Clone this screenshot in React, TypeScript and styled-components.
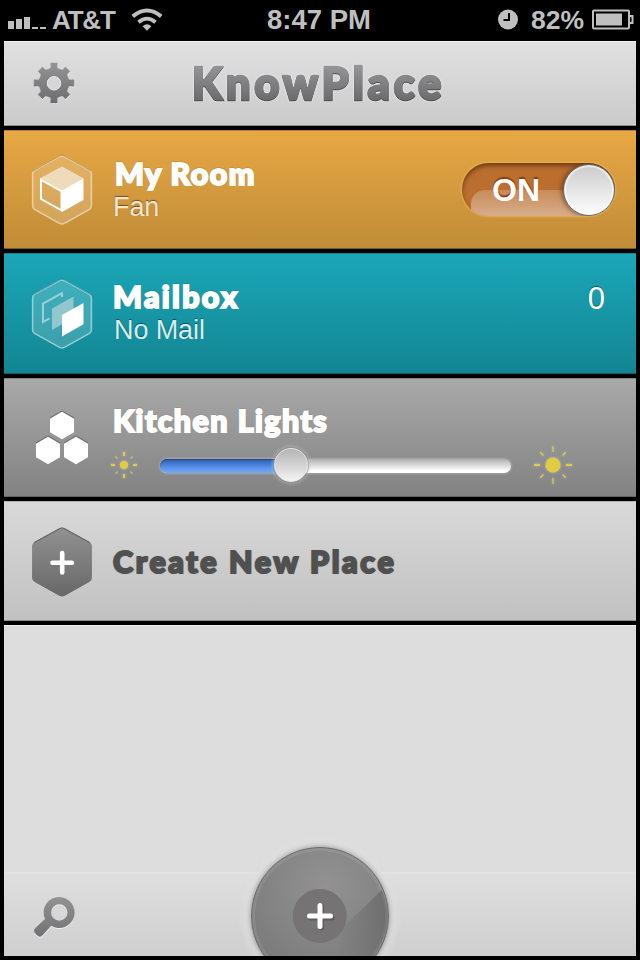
import React from "react";
import styled, { createGlobalStyle } from "styled-components";

const GlobalStyle = createGlobalStyle`
  * { box-sizing: border-box; }
  body { margin: 0; background: #000; }
`;

const sans = `"Liberation Sans", Arial, sans-serif`;
const display = `Lato, "Open Sans", sans-serif`;

const Screen = styled.div`
  width: 640px;
  height: 960px;
  display: flex;
  flex-direction: column;
  background: #000;
  overflow: hidden;
  font-family: ${sans};
`;

const StatusBar = styled.div`
  height: 41px;
  flex: none;
  display: grid;
  grid-template-columns: 1fr auto 1fr;
  align-items: center;
  padding: 0 6px 2px 8px;
  color: #bfbfbf;
`;

const StatusGroup = styled.div<{ $end?: boolean }>`
  display: flex;
  align-items: center;
  justify-content: ${(p) => (p.$end ? "flex-end" : "flex-start")};
`;

const StatusText = styled.span<{ $size: number; $track?: number; $ml?: number; $mr?: number }>`
  font-weight: 700;
  font-size: ${(p) => p.$size}px;
  line-height: 38px;
  white-space: nowrap;
  letter-spacing: ${(p) => p.$track ?? 0}px;
  margin-left: ${(p) => p.$ml ?? 0}px;
  margin-right: ${(p) => p.$mr ?? 0}px;
`;

const Content = styled.div`
  position: relative;
  width: 632px;
  height: 915px;
  margin: 0 4px;
  display: flex;
  flex-direction: column;
  overflow: hidden;
`;

const Header = styled.header`
  height: 85px;
  flex: none;
  display: grid;
  grid-template-columns: 159px 1fr 120px;
  align-items: center;
  padding: 0 0 1px 29px;
  background: linear-gradient(#e1e1e1, #cacaca);
  box-shadow: inset 0 1px #f0f0f0, inset 0 -1px #8e8e8e;
`;

const Title = styled.h1`
  margin: -1px 0 0;
  font: 900 43px/60px ${display};
  letter-spacing: 4.1px;
  white-space: nowrap;
  background: linear-gradient(#969698 20%, #69696b 82%);
  background-clip: text;
  -webkit-background-clip: text;
  color: transparent;
  -webkit-text-stroke: 2.4px transparent;
  filter: drop-shadow(0 1px 0 #4f4f4f) drop-shadow(0 0 1px #f4f4f4);
`;

const tones = {
  amber: ["#e8a845", "#c08c37", "#7c5a22"],
  teal: ["#1ba7b9", "#138592", "#0c5f69"],
  gray: ["#a9a9a9", "#828282", "#646464"],
  light: ["#d9d9d9", "#c1c1c1", "#8c8c8c"],
};

const Row = styled.section<{ $tone: keyof typeof tones; $height: number }>`
  height: ${(p) => p.$height}px;
  flex: none;
  margin-top: 4px;
  display: grid;
  grid-template-columns: 60px 1fr auto;
  column-gap: 20px;
  align-items: center;
  padding: 0 20px 0 28px;
  background: linear-gradient(${(p) => tones[p.$tone][0]}, ${(p) => tones[p.$tone][1]});
  box-shadow: inset 0 1px ${(p) => tones[p.$tone][2]}80, inset 0 -1px ${(p) => tones[p.$tone][2]};
`;

const Labels = styled.div<{ $top?: number }>`
  display: flex;
  flex-direction: column;
  align-self: start;
  padding-top: ${(p) => p.$top ?? 25}px;
  min-width: 0;
`;

const Name = styled.h2<{ $track?: number; $indent?: number; $dark?: boolean }>`
  margin: 0;
  padding-left: ${(p) => p.$indent ?? 0}px;
  font: 900 30.5px/36px ${display};
  letter-spacing: ${(p) => p.$track ?? 0}px;
  white-space: nowrap;
  color: ${(p) => (p.$dark ? "#505050" : "#fff")};
  -webkit-text-stroke: 2px ${(p) => (p.$dark ? "#505050" : "#fff")};
  text-shadow: ${(p) => (p.$dark ? "0 0 2px #777" : "0 -1px 1px rgba(0, 0, 0, 0.65), 1px 0 1px rgba(0, 0, 0, 0.3)")};
`;

const Detail = styled.p<{ $tint: string; $indent?: number }>`
  margin: 2px 0 0;
  padding-left: ${(p) => p.$indent ?? 0}px;
  font: 400 27px/28px ${sans};
  letter-spacing: -0.1px;
  color: ${(p) => p.$tint};
  text-shadow: 0 -1px 1px rgba(0, 0, 0, 0.45);
`;

const Count = styled.span`
  align-self: start;
  padding: 28px 11px 0 0;
  font: 400 31px/36px ${sans};
  color: #fff;
  text-shadow: 0 -1px 1px rgba(0, 0, 0, 0.4);
`;

const Switch = styled.div`
  position: relative;
  width: 153px;
  height: 53px;
  margin-right: 1px;
  border-radius: 27px;
  display: flex;
  align-items: center;
  justify-content: space-between;
  padding: 1px 0 0 30px;
  overflow: hidden;
  background: #ba6e2f;
  box-shadow: inset 0 3px 4px rgba(60, 25, 0, 0.55), 0 0 2px 1px rgba(250, 200, 110, 0.5);

  /* Glossy highlight on the lower half */
  &::before {
    content: "";
    position: absolute;
    inset: 27px 0 0 9px;
    border-radius: 14px 0 0 0;
    background: linear-gradient(rgba(255, 255, 255, 0.2), rgba(255, 255, 255, 0.44));
  }
`;

const SwitchText = styled.span`
  position: relative;
  font: 700 32px/52px ${sans};
  color: #fff;
  text-shadow: 0 -2px 1px #88410f;
`;

const SwitchKnob = styled.span`
  position: relative;
  width: 52px;
  height: 52px;
  border-radius: 50%;
  border: 1px solid #5f666c;
  background: linear-gradient(#cbcbcb, #fefefe);
  box-shadow: inset 0 0 1px 2px rgba(255, 255, 255, 0.6), -2px 0 4px rgba(70, 30, 0, 0.5);
`;

const SliderLine = styled.div`
  display: grid;
  grid-template-columns: 36px 351px 42px;
  column-gap: 18px;
  align-items: center;
  height: 44px;
  margin: 5px 0 0 -6px;
`;

const Track = styled.div`
  position: relative;
  width: 351px;
  height: 14px;
  margin-top: 2px;
  border-radius: 7px;
  background: linear-gradient(#b0b0b0, #fff 85%);
  box-shadow: 0 0 3px rgba(225, 225, 225, 0.65);
`;

const Fill = styled.div`
  height: 14px;
  border-radius: 7px 0 0 7px;
  background: linear-gradient(#2b5db2, #5b94eb 65%, #72a8f8);
  box-shadow: inset 0 1px 1px #224a91;
`;

const Thumb = styled.div`
  position: absolute;
  top: -11px;
  width: 34px;
  height: 34px;
  margin-left: -17px;
  border-radius: 50%;
  border: 1px solid #e6e6e6;
  background: linear-gradient(#b3b3b3, #f4f4f4);
  box-shadow: 0 0 1px 1px rgba(125, 125, 125, 0.6), 0 0 3px 2px rgba(220, 220, 220, 0.4);
`;

const Empty = styled.main`
  height: 247px;
  flex: none;
  margin-top: 4px;
  background: #dddddd;
  box-shadow: inset 0 1px #f0f0f0;
`;

const Footer = styled.footer`
  height: 84px;
  flex: none;
  display: flex;
  align-items: center;
  padding: 6px 0 0 29px;
  background: linear-gradient(#dfdfdf, #cfcfcf);
  box-shadow: inset 0 2px #e3e3e3;
`;

const AddButton = styled.button`
  position: absolute;
  left: 247px;
  bottom: -29px;
  width: 138px;
  height: 138px;
  padding: 0;
  border: 1px solid #6b6b6b;
  border-radius: 50%;
  display: grid;
  place-items: center;
  background: radial-gradient(circle at 55% 28%, #929292, #7b7b7b 75%);
  box-shadow: inset 0 0 0 3px rgba(255, 255, 255, 0.09), 0 0 5px rgba(60, 60, 60, 0.5), 0 0 6px 9px rgba(224, 224, 224, 0.6);
`;

const Icon = styled.svg`
  display: block;
  overflow: visible;
`;

const gearPath = (() => {
  const parts: string[] = [];
  for (let i = 0; i < 8; i++) {
    const base = (i * Math.PI) / 4;
    const tip = i % 2 ? 19.6 : 20.2;
    const points = [
      [-0.3, 15],
      [-0.2, 15.6],
      [-0.16, tip],
      [0.16, tip],
      [0.2, 15.6],
      [0.3, 15],
    ];
    points.forEach(([a, r]) => {
      const x = 21 + r * Math.sin(base + a);
      const y = 21 - r * Math.cos(base + a);
      parts.push(`${parts.length ? "L" : "M"}${x.toFixed(2)} ${y.toFixed(2)}`);
    });
  }
  return `${parts.join("")}Z`;
})();

const Gear = () => (
  <Icon width="42" height="42" viewBox="0 0 42 42">
    <defs>
      <linearGradient id="gear" x1="0" y1="0" x2="0" y2="1">
        <stop offset="0" stopColor="#949495" />
        <stop offset="1" stopColor="#6d6d70" />
      </linearGradient>
    </defs>
    <path d={gearPath} fill="#f2f2f2" transform="translate(.4 1)" />
    <path d={gearPath} fill="url(#gear)" stroke="url(#gear)" strokeWidth=".5" />
    <circle cx="21" cy="21.3" r="6.7" fill="#d6d6d6" stroke="#ececec" />
  </Icon>
);

const hexagon = "M27.5 1.6Q30 .2 32.5 1.6L57.5 15.4Q59.4 16.5 59.4 19V51Q59.4 53.2 57.5 54.4L32.5 68.4Q30 69.8 27.5 68.4L2.5 54.4Q.6 53.2 .6 51V19Q.6 16.5 2.5 15.4Z";

const HexFrame = ({ children }: { children: React.ReactNode }) => (
  <Icon width="60" height="70" viewBox="0 0 60 70">
    <path d={hexagon} fill="#fff" fillOpacity=".17" stroke="#fff" strokeOpacity=".5" strokeWidth="1.5" />
    <path d="M1 16L30-.2L59 16" fill="none" stroke="#000" strokeOpacity=".22" strokeWidth="1" />
    {children}
  </Icon>
);

const RoomIcon = () => (
  <HexFrame>
    <path d="M30 11.5L51.5 23.3L30 35.3L8 23.3Z" fill="#f0dabc" />
    <path d="M30 35.3L51.5 23.3V45L30 57Z" fill="#fff" />
    <path d="M9 24.8L29.5 36V55.4L9 44Z" fill="none" stroke="#fff" strokeWidth="2" />
  </HexFrame>
);

const MailIcon = () => (
  <HexFrame>
    <path d="M30 18V14.2L11 24.6V43L17.5 39.3" fill="none" stroke="#9ad0d6" strokeWidth="2" />
    <path d="M20 29.5L41.5 17.6V39L20 51Z" fill="#91c7ce" />
    <path d="M30 36L51.5 24V45.3L30 57.5Z" fill="#fff" />
  </HexFrame>
);

const LightsIcon = () => (
  <Icon width="60" height="70" viewBox="0 0 60 70">
    {[
      [30, 22.5],
      [16, 47.5],
      [44, 47.5],
    ].map(([x, y]) => (
      <g key={x} transform={`translate(${x} ${y})`}>
        <path d="M-12-7.6L0-14.3L12-7.6" fill="none" stroke="#5c5c5c" strokeOpacity=".7" strokeWidth="1.2" />
        <path d="M0-13.7L12-6.8V6.8L0 13.7L-12 6.8V-6.8Z" fill="#fff" />
      </g>
    ))}
  </Icon>
);

const PlaceIcon = () => (
  <Icon width="60" height="70" viewBox="0 -1 60 70">
    <defs>
      <linearGradient id="place" x1="0" y1="0" x2="0" y2="1">
        <stop offset="0" stopColor="#919191" />
        <stop offset="1" stopColor="#686868" />
      </linearGradient>
    </defs>
    <path d={hexagon} fill="url(#place)" stroke="url(#place)" />
    <path d="M2 15.8L28 1.5Q30 .5 32 1.5L58 15.8" fill="none" stroke="#686868" strokeWidth="1.2" />
    <path d="M30.2 26V45.5M20.5 35.8H40" stroke="#fff" strokeWidth="4.6" strokeLinecap="round" />
  </Icon>
);

const Sun = ({ size, core, inner, outer, shift = 0 }: { size: number; core: number; inner: number; outer: number; shift?: number }) => (
  <Icon width={size} height={size} viewBox={`${-size / 2 - shift} ${-size / 2} ${size} ${size}`}>
    <g filter="drop-shadow(0 0 1.5px #bdbdbd)">
      <circle r={core} fill="#e0cb41" />
      {[0, 45, 90, 135, 180, 225, 270, 315].map((angle) => (
        <path
          key={angle}
          d={angle % 90 ? `M0 ${-inner - 0.5}V${-outer + 1}` : `M0 ${-inner}V${-outer}`}
          transform={`rotate(${angle})`}
          stroke="#e0cb41"
          strokeWidth={size < 40 ? (angle % 90 ? 1 : 2) : angle % 180 === 90 ? 2 : 1.2}
        />
      ))}
    </g>
  </Icon>
);

const Signal = () => (
  <Icon width="39" height="14" viewBox="0 0 39 14">
    <path d="M0 8h6v8H0zM8 6h6v10H8zM16 4h6v12h-6zM24 14h6v2h-6zM32 14h6v2h-6z" fill="#bfbfbf" />
  </Icon>
);

const Wifi = () => (
  <Icon width="32" height="24" viewBox="0 0 32 24">
    <g fill="none" stroke="#bfbfbf" strokeWidth="4">
      <path d="M1.8 8.4Q16-3.4 30.2 8.4" />
      <path d="M7.5 14.2Q16 7 24.5 14.2" strokeWidth="3.8" />
    </g>
    <path d="M16 22.7L11.6 18.3Q16 14.3 20.4 18.3Z" fill="#bfbfbf" />
  </Icon>
);

const Clock = () => (
  <Icon width="20" height="20" viewBox="0 0.5 20 20">
    <circle cx="10" cy="10" r="10" fill="#bfbfbf" />
    <path d="M11 3.5V10.5H5.5" fill="none" stroke="#000" strokeWidth="2" />
  </Icon>
);

const Battery = () => (
  <Icon width="42" height="20" viewBox="0 0.5 42 20">
    <rect x="1" y="1" width="36" height="18" rx="1" fill="none" stroke="#bfbfbf" strokeWidth="2" />
    <path d="M4 4h26v12H4z" fill="#bfbfbf" />
    <path d="M38 6.5h2.5v7H38" fill="none" stroke="#bfbfbf" strokeWidth="2" />
  </Icon>
);

const Magnifier = () => (
  <Icon width="42" height="42" viewBox="0 0 42 42">
    <defs>
      <linearGradient id="lens" x1="0" y1="0" x2="0" y2="1">
        <stop offset="0" stopColor="#929293" />
        <stop offset="1" stopColor="#727274" />
      </linearGradient>
    </defs>
    <g filter="drop-shadow(0 1px .5px #eee)">
      <path
        fill="url(#lens)"
        fillRule="evenodd"
        d="M26.3 1A15.5 15.5 0 1 1 18.2 29.8L9.5 39.3Q6.8 42 4 39.2L2 37.2Q-.2 34.7 2.4 32L12 23A15.5 15.5 0 0 1 26.3 1ZM26.3 8.3A8.2 8.2 0 1 0 26.3 24.7A8.2 8.2 0 0 0 26.3 8.3Z"
      />
    </g>
  </Icon>
);

const AddGlyph = () => (
  <Icon width="136" height="136" viewBox="-68 -68 136 136">
    <defs>
      <linearGradient id="shade" gradientUnits="userSpaceOnUse" x1="66" y1="0" x2="12" y2="22">
        <stop offset="0" stopColor="#555" stopOpacity=".42" />
        <stop offset="1" stopColor="#555" stopOpacity="0" />
      </linearGradient>
    </defs>
    <path d="M14 20L62-26A67 67 0 0 1 48 47L14 66Z" fill="url(#shade)" />
    <circle r="27" cx="-.3" fill="#757373" />
    <g strokeLinecap="round" strokeWidth="5" fill="none">
      <path d="M1-10.2V11.5M-9.8 1.5H11.8" stroke="#4e4e4e" strokeOpacity=".6" transform="translate(.5 .5)" />
      <path d="M0-10.5V10.5M-10.5 0H10.5" stroke="#fff" />
    </g>
  </Icon>
);

export default function App() {
  return (
    <Screen>
      <GlobalStyle />
      <StatusBar>
        <StatusGroup>
          <Signal />
          <StatusText $size={26} $track={-1.2} $ml={5} $mr={16}>AT&amp;T</StatusText>
          <Wifi />
        </StatusGroup>
        <StatusText $size={27.5} $ml={-4}>8:47 PM</StatusText>
        <StatusGroup $end>
          <Clock />
          <StatusText $size={26.5} $ml={13} $mr={8}>82%</StatusText>
          <Battery />
        </StatusGroup>
      </StatusBar>
      <Content>
        <Header>
          <Gear />
          <Title>KnowPlace</Title>
        </Header>
        <Row $tone="amber" $height={119}>
          <RoomIcon />
          <Labels>
            <Name $indent={3} $track={1.4}>My Room</Name>
            <Detail $tint="#f3e6d0" $indent={1}>Fan</Detail>
          </Labels>
          <Switch>
            <SwitchText>ON</SwitchText>
            <SwitchKnob />
          </Switch>
        </Row>
        <Row $tone="teal" $height={121}>
          <MailIcon />
          <Labels>
            <Name $indent={1} $track={2.3}>Mailbox</Name>
            <Detail $tint="#d5edef" $indent={2}>No Mail</Detail>
          </Labels>
          <Count>0</Count>
        </Row>
        <Row $tone="gray" $height={119}>
          <LightsIcon />
          <Labels $top={24}>
            <Name $indent={1} $track={1.4}>Kitchen Lights</Name>
            <SliderLine>
              <Sun size={36} core={4} inner={9} outer={13} />
              <Track>
                <Fill style={{ width: "131px" }} />
                <Thumb style={{ left: "131px" }} />
              </Track>
              <Sun size={42} core={7.5} inner={13} outer={19} shift={3} />
            </SliderLine>
          </Labels>
        </Row>
        <Row $tone="light" $height={120}>
          <PlaceIcon />
          <Name $dark $indent={1} $track={2.6}>Create New Place</Name>
        </Row>
        <Empty />
        <Footer>
          <Magnifier />
        </Footer>
        <AddButton aria-label="Add">
          <AddGlyph />
        </AddButton>
      </Content>
    </Screen>
  );
}
